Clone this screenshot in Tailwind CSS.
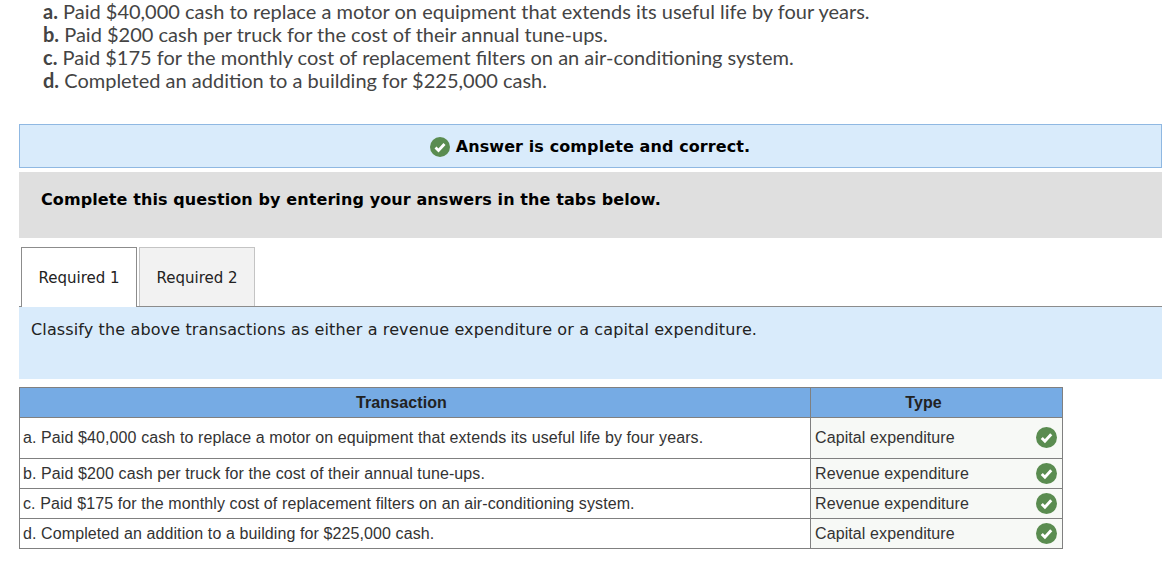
<!DOCTYPE html>
<html lang="en">
<head>
  <meta charset="UTF-8" />
  <title>Required 1</title>
  <script src="https://cdn.jsdelivr.net/npm/@tailwindcss/browser@4"></script>
</head>
<body class="bg-white w-[1165px] h-[562px] overflow-hidden font-['Liberation_Sans',sans-serif]">

  <!-- Transactions -->
  <div class="pl-[43px] h-[124px] font-['Lato',sans-serif] text-[20px] leading-[23px] text-[#444]">
    <p><b>a.</b> Paid $40,000 cash to replace a motor on equipment that extends its useful life by four years.</p>
    <p><b>b.</b> Paid $200 cash per truck for the cost of their annual tune-ups.</p>
    <p><b>c.</b> Paid $175 for the monthly cost of replacement filters on an air-conditioning system.</p>
    <p><b>d.</b> Completed an addition to a building for $225,000 cash.</p>
  </div>

  <div class="ml-[19px] w-[1143px]">
    <!-- Result banner -->
    <div class="h-[44px] bg-[#d9ebfb] border border-[#8fb8e2] flex items-center justify-center gap-[6px] pr-[1px] pt-px font-['DejaVu_Sans',sans-serif] font-bold text-[16px] tracking-[0.1px] text-black">
      <svg class="w-[20px] h-[20px]" viewBox="0 0 20 20"><circle cx="10" cy="10" r="10" fill="#5a8c50"/><path d="M5.5 10.5l3 3 6-6.5" fill="none" stroke="#fff" stroke-width="2.8"/></svg>
      <span>Answer is complete and correct.</span>
    </div>

    <div class="mt-[4px] h-[66px] bg-[#dfdfdf] pl-[22px] pt-[17px] font-['DejaVu_Sans',sans-serif] font-bold text-[16px] leading-[22px] tracking-[0.1px] text-black">
      Complete this question by entering your answers in the tabs below.
    </div>

    <!-- Tabs -->
    <div class="mt-[9px] h-[60px] flex gap-[2px] pl-[2px] border-b border-[#8c8c8c] font-['DejaVu_Sans',sans-serif] text-[15px] text-[#222]">
      <div class="w-[116px] h-[60px] bg-white border border-b-0 border-[#8c8c8c] flex items-center justify-center pt-px">Required 1</div>
      <div class="w-[116px] h-[59px] bg-[#f2f2f2] border border-b-0 border-[#c4c4c4] flex items-center justify-center pt-[2px]">Required 2</div>
    </div>

    <div class="h-[72px] bg-[#d9ebfb] pl-[12px] pt-[12px] font-['DejaVu_Sans',sans-serif] text-[16px] leading-[22px] tracking-[0.13px] text-[#222]">
      Classify the above transactions as either a revenue expenditure or a capital expenditure.
    </div>

    <!-- Answer table -->
    <table class="mt-[8px] w-[1044px] table-fixed border-collapse text-[16px] tracking-[0.1px] text-[#333]">
      <thead>
        <tr class="h-[30px] bg-[#76abe4] text-[#222] font-bold">
          <th class="w-[791px] border border-[#808080] font-bold pr-[27px]">Transaction</th>
          <th class="border border-[#808080] font-bold pr-[26px]">Type</th>
        </tr>
      </thead>
      <tbody>
        <tr class="h-[41px]">
          <td class="border border-[#808080] pl-[3px]">a. Paid $40,000 cash to replace a motor on equipment that extends its useful life by four years.</td>
          <td class="border border-[#808080] bg-[#f7f9f6] pl-[4px]">
            <div class="flex items-center justify-between pr-[5px]">Capital expenditure
              <svg class="w-[21px] h-[21px] -mt-px" viewBox="0 0 20 20"><circle cx="10" cy="10" r="10" fill="#5a8c50"/><path d="M5.5 10.5l3 3 6-6.5" fill="none" stroke="#fff" stroke-width="2.8"/></svg>
            </div>
          </td>
        </tr>
        <tr class="h-[30px]">
          <td class="border border-[#808080] pl-[3px]">b. Paid $200 cash per truck for the cost of their annual tune-ups.</td>
          <td class="border border-[#808080] bg-[#f7f9f6] pl-[4px]">
            <div class="flex items-center justify-between pr-[5px]">Revenue expenditure
              <svg class="w-[21px] h-[21px] -mt-px" viewBox="0 0 20 20"><circle cx="10" cy="10" r="10" fill="#5a8c50"/><path d="M5.5 10.5l3 3 6-6.5" fill="none" stroke="#fff" stroke-width="2.8"/></svg>
            </div>
          </td>
        </tr>
        <tr class="h-[30px]">
          <td class="border border-[#808080] pl-[3px]">c. Paid $175 for the monthly cost of replacement filters on an air-conditioning system.</td>
          <td class="border border-[#808080] bg-[#f7f9f6] pl-[4px]">
            <div class="flex items-center justify-between pr-[5px]">Revenue expenditure
              <svg class="w-[21px] h-[21px] -mt-px" viewBox="0 0 20 20"><circle cx="10" cy="10" r="10" fill="#5a8c50"/><path d="M5.5 10.5l3 3 6-6.5" fill="none" stroke="#fff" stroke-width="2.8"/></svg>
            </div>
          </td>
        </tr>
        <tr class="h-[30px]">
          <td class="border border-[#808080] pl-[3px]">d. Completed an addition to a building for $225,000 cash.</td>
          <td class="border border-[#808080] bg-[#f7f9f6] pl-[4px]">
            <div class="flex items-center justify-between pr-[5px]">Capital expenditure
              <svg class="w-[21px] h-[21px] -mt-px" viewBox="0 0 20 20"><circle cx="10" cy="10" r="10" fill="#5a8c50"/><path d="M5.5 10.5l3 3 6-6.5" fill="none" stroke="#fff" stroke-width="2.8"/></svg>
            </div>
          </td>
        </tr>
      </tbody>
    </table>
  </div>

</body>
</html>
